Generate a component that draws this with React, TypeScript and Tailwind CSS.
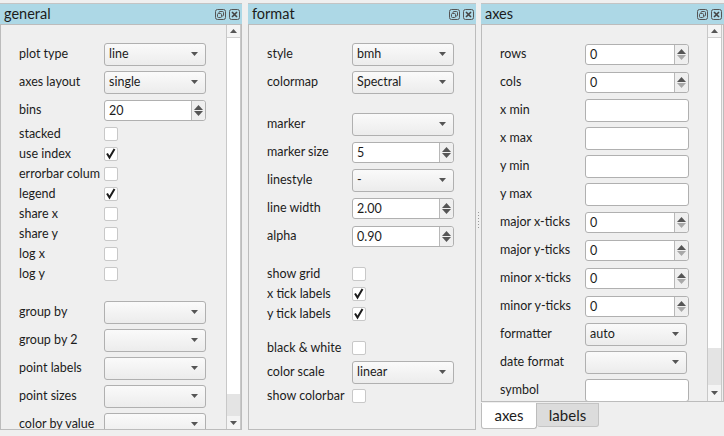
import { ReactNode } from 'react';

const Arrow = ({ up = false, dim = false }: { up?: boolean; dim?: boolean }) => (
  <svg width="7" height="4" viewBox="0 0 7 4" className="block">
    <path d={up ? 'M3.5 0 L7 4 L0 4 Z' : 'M0 0 L7 0 L3.5 4 Z'} fill={dim ? '#a8a8a8' : '#555'} />
  </svg>
);

// spin box arrows are a little bigger than the combo ones
const SpinArrow = ({ up = false, dim = false }: { up?: boolean; dim?: boolean }) => (
  <svg width="9" height="5" viewBox="0 0 9 5" className="block">
    <path d={up ? 'M4.5 0 L9 5 L0 5 Z' : 'M0 0 L9 0 L4.5 5 Z'} fill={dim ? '#a8a8a8' : '#555'} />
  </svg>
);

const Combo = ({ value = '' }: { value?: string }) => (
  <div className="flex h-[23px] w-[102px] shrink-0 items-center justify-between rounded-[3px] border border-[#b0b0b0] bg-gradient-to-b from-[#fafafa] to-[#ececec] pl-[4px] pr-[7px] text-[#1c1c1c]">
    <span>{value}</span>
    <Arrow />
  </div>
);

const Spin = ({ value = '', downDim = false, wide = false }: { value?: string; downDim?: boolean; wide?: boolean }) => (
  <div className={`flex h-[21px] shrink-0 rounded-[3px] border border-[#b0b0b0] bg-white text-[#1c1c1c] ${wide ? 'w-[104px]' : 'w-[102px]'}`}>
    <span className="flex-1 pl-[4px] leading-[19px]">{value}</span>
    <div className="flex w-[14px] flex-col items-center justify-center gap-[1px] rounded-r-[3px] border-l border-[#b8b8b8] bg-[#efefef]">
      <SpinArrow up />
      <SpinArrow dim={downDim} />
    </div>
  </div>
);

const LineEdit = () => <div className="h-[23px] w-[104px] shrink-0 rounded-[3px] border border-[#b0b0b0] bg-white" />;

const Check = ({ on = false }: { on?: boolean }) => (
  <div className="flex h-[14px] w-[14px] shrink-0 items-center justify-center rounded-[2px] border border-[#c8c8c8] bg-white">
    {on && (
      <svg width="12" height="12" viewBox="0 0 12 12">
        <path d="M2 5.5 L4.5 9.5 L9.5 1" fill="none" stroke="#1c1c1c" strokeWidth="2" />
      </svg>
    )}
  </div>
);

const Row = ({ label, h = 28, children }: { label: string; h?: number; children: ReactNode }) => (
  <div className={`flex items-center ${h === 20 ? 'h-[20px]' : 'h-[28px]'}`}>
    <span className="w-[85px] shrink-0 whitespace-nowrap leading-[14px]">{label}</span>
    {children}
  </div>
);

const TitleBar = ({ title }: { title: string }) => (
  <div className="flex h-[20px] shrink-0 items-center justify-between bg-[#add8e6] pl-[4px] pr-[2px] text-[14.5px] text-[#1c1c1c]">
    <span>{title}</span>
    <div className="flex gap-[3px]">
      <svg width="11" height="11" viewBox="0 0 11 11" className="block">
        <rect x="0.5" y="0.5" width="10" height="10" rx="2" fill="none" stroke="#555" />
        <rect x="4" y="2.5" width="4.5" height="4.5" rx="1" fill="none" stroke="#555" />
        <rect x="2.5" y="4.5" width="4" height="4" rx="1" fill="#add8e6" stroke="#555" />
      </svg>
      <svg width="11" height="11" viewBox="0 0 11 11" className="block">
        <rect x="0.5" y="0.5" width="10" height="10" rx="2" fill="none" stroke="#555" />
        <path d="M3 3 L8 8 M8 3 L3 8" stroke="#444" strokeWidth="1.6" />
      </svg>
    </div>
  </div>
);

const ScrollBar = ({ thumbClass, downClass }: { thumbClass: string; downClass: string }) => (
  <div className="flex h-full w-[15px] shrink-0 flex-col border-x border-[#c8c8c8] bg-white">
    <div className="flex h-[13px] shrink-0 items-center justify-center border-b border-[#d0d0d0] bg-[#f4f4f4]">
      <Arrow up />
    </div>
    <div className="flex-1" />
    <div className={`shrink-0 bg-[#e4e4e4] ${thumbClass}`} />
    <div className={`flex shrink-0 items-center justify-center bg-[#f4f4f4] ${downClass}`}>
      <Arrow />
    </div>
  </div>
);

export default function App() {
  return (
    <div
      className="flex h-[436px] w-[724px] overflow-hidden bg-[#efefef] pt-[3px] text-[12.5px] text-[#1c1c1c]"
      style={{ fontFamily: 'Lato, sans-serif' }}
    >
      {/* general */}
      <div className="flex h-[427px] w-[242px] shrink-0 flex-col border-t border-[#c4c4c4]">
        <TitleBar title="general" />
        <div className="flex min-h-0 flex-1 overflow-hidden border border-[#bcbcbc]">
          <div className="min-w-0 flex-1 overflow-hidden pl-[18px] pt-[15px]">
            <Row label="plot type"><Combo value="line" /></Row>
            <Row label="axes layout"><Combo value="single" /></Row>
            <Row label="bins"><Spin value="20" /></Row>
            <Row label="stacked" h={20}><Check /></Row>
            <Row label="use index" h={20}><Check on /></Row>
            <Row label="errorbar colum" h={20}><Check /></Row>
            <Row label="legend" h={20}><Check on /></Row>
            <Row label="share x" h={20}><Check /></Row>
            <Row label="share y" h={20}><Check /></Row>
            <Row label="log x" h={20}><Check /></Row>
            <Row label="log y" h={20}><Check /></Row>
            <div className="h-[14px]" />
            <Row label="group by"><Combo /></Row>
            <Row label="group by 2"><Combo /></Row>
            <Row label="point labels"><Combo /></Row>
            <Row label="point sizes"><Combo /></Row>
            <Row label="color by value"><Combo /></Row>
          </div>
          <ScrollBar thumbClass="h-[22px]" downClass="h-[13px]" />
        </div>
      </div>

      <div className="w-[6px] shrink-0" />

      {/* format */}
      <div className="flex h-[427px] w-[228px] shrink-0 flex-col border-t border-[#c4c4c4]">
        <TitleBar title="format" />
        <div className="min-h-0 flex-1 overflow-hidden border border-[#bcbcbc] pl-[18px] pt-[15px]">
          <Row label="style"><Combo value="bmh" /></Row>
          <Row label="colormap"><Combo value="Spectral" /></Row>
          <div className="h-[14px]" />
          <Row label="marker"><Combo /></Row>
          <Row label="marker size"><Spin value="5" /></Row>
          <Row label="linestyle"><Combo value="-" /></Row>
          <Row label="line width"><Spin value="2.00" /></Row>
          <Row label="alpha"><Spin value="0.90" /></Row>
          <div className="h-[14px]" />
          <Row label="show grid" h={20}><Check /></Row>
          <Row label="x tick labels" h={20}><Check on /></Row>
          <Row label="y tick labels" h={20}><Check on /></Row>
          <div className="h-[14px]" />
          <Row label="black & white" h={20}><Check /></Row>
          <Row label="color scale"><Combo value="linear" /></Row>
          <Row label="show colorbar" h={20}><Check /></Row>
        </div>
      </div>

      {/* splitter handle */}
      <div className="flex w-[5px] shrink-0 flex-col items-center justify-center gap-[2px]">
        {[0, 1, 2, 3, 4, 5].map((i) => (
          <div key={i} className="h-[1px] w-[1px] bg-[#9a9a9a]" />
        ))}
      </div>

      {/* axes */}
      <div className="flex h-[427px] min-w-0 flex-1 flex-col border-t border-[#c4c4c4]">
        <TitleBar title="axes" />
        <div className="flex h-[378px] shrink-0 overflow-hidden border border-[#bcbcbc] pr-[1px]">
          <div className="min-w-0 flex-1 overflow-hidden pl-[18px] pt-[15px]">
            <Row label="rows"><Spin value="0" wide downDim /></Row>
            <Row label="cols"><Spin value="0" wide downDim /></Row>
            <Row label="x min"><LineEdit /></Row>
            <Row label="x max"><LineEdit /></Row>
            <Row label="y min"><LineEdit /></Row>
            <Row label="y max"><LineEdit /></Row>
            <Row label="major x-ticks"><Spin value="0" wide downDim /></Row>
            <Row label="major y-ticks"><Spin value="0" wide downDim /></Row>
            <Row label="minor x-ticks"><Spin value="0" wide downDim /></Row>
            <Row label="minor y-ticks"><Spin value="0" wide downDim /></Row>
            <Row label="formatter"><Combo value="auto" /></Row>
            <Row label="date format"><Combo /></Row>
            <Row label="symbol"><LineEdit /></Row>
          </div>
          <ScrollBar thumbClass="h-[37px]" downClass="h-[16px]" />
        </div>
        <div className="mt-[1px] flex text-[15px]">
          <div className="flex h-[26px] w-[56px] items-center justify-center rounded-b-[3px] border border-t-0 border-[#bcbcbc] bg-white">
            axes
          </div>
          <div className="flex h-[24px] w-[62px] items-center justify-center rounded-b-[3px] border border-l-0 border-[#c4c4c4] bg-[#dcdcdc]">
            labels
          </div>
        </div>
      </div>
    </div>
  );
}
